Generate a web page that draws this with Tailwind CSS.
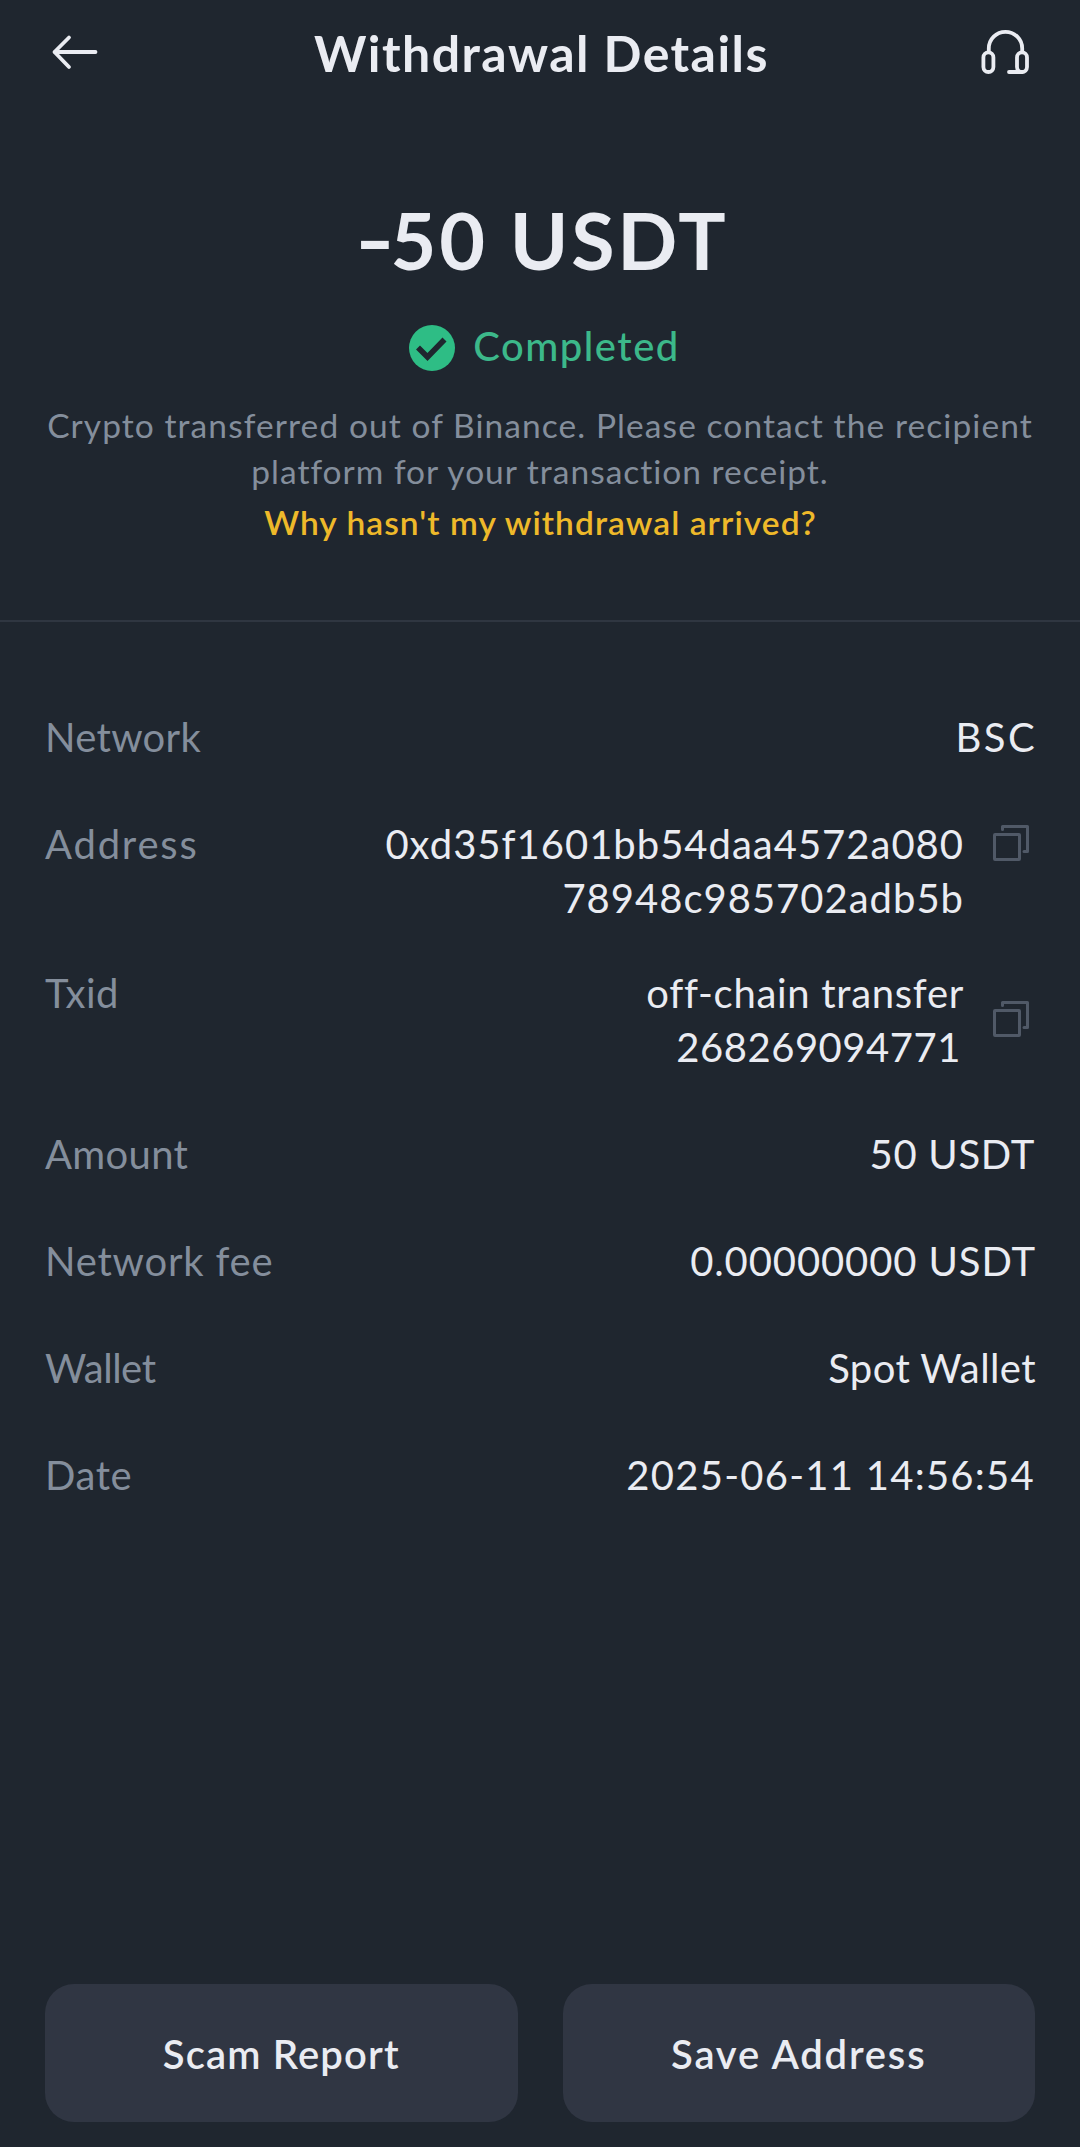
<!DOCTYPE html>
<html lang="en">
<head>
<meta charset="utf-8">
<title>Withdrawal Details</title>
<script src="https://cdn.jsdelivr.net/npm/@tailwindcss/browser@4"></script>
</head>
<body class="bg-[#1f262f] font-[Lato,sans-serif] text-[#eaecf2]">
<div class="flex h-[2147px] w-[1080px] flex-col overflow-hidden">
  <header class="flex h-[104px] shrink-0 items-center justify-between pl-[50px] pr-[48px]">
    <svg class="h-[40px] w-[50px]" viewBox="0 0 50 40" fill="none" stroke="currentColor" stroke-width="3.8" stroke-linecap="round" stroke-linejoin="round"><path d="M45.5 20H4.5M19 5.5 4.5 20 19 35"/></svg>
    <h1 class="pt-[1px] pl-[3px] text-[50px] leading-[60px] font-bold tracking-[1.46px]">Withdrawal Details</h1>
    <svg class="h-[48px] w-[52px]" viewBox="0 0 52 48" fill="none" stroke="currentColor" stroke-width="3.8" stroke-linecap="round" stroke-linejoin="round"><rect x="3.4" y="24.4" width="10" height="19.6" rx="5"/><rect x="37" y="24.4" width="10" height="19.6" rx="5"/><path d="M8.8 24V20.5a16.7 16.7 0 0 1 33.4 0V24M29 44h13"/></svg>
  </header>

  <section class="flex h-[518px] shrink-0 flex-col items-center border-b-2 border-[#2f3641] pt-[96px]">
    <p class="pl-[3px] text-[79px] leading-[80px] font-bold tracking-[2.8px]"><span class="inline-block w-[36px] origin-left -translate-y-[1px] scale-x-[1.35] tracking-normal">-</span>50 USDT</p>
    <div class="mt-[45px] flex h-[46px] items-center gap-[18px] pl-[9px]">
      <svg class="h-[46px] w-[46px]" viewBox="0 0 46 46"><circle cx="23" cy="23" r="23" fill="#2ebd85"/><path d="M9 22.5 18.5 32 35.5 14.5" fill="none" stroke="#1f262f" stroke-width="5.6"/></svg>
      <span class="-mt-[4px] text-[40px] leading-[48px] font-medium tracking-[1.5px] text-[#3cb88a]">Completed</span>
    </div>
    <p class="mt-[31px] text-center text-[33.5px] leading-[46px] tracking-[1.08px] text-[#848e9c]">Crypto transferred out of Binance. Please contact the recipient<br><span class="tracking-[1px]">platform for your transaction receipt.</span></p>
    <a class="mt-[5px] pl-[1px] text-[33.5px] leading-[46px] font-semibold tracking-[1.05px] text-[#eeb92a]">Why hasn't my withdrawal arrived?</a>
  </section>

  <dl class="flex flex-col pl-[45px] pr-[45px] pt-[88px] text-[40px] leading-[54px]">
    <div class="mb-[53px] flex justify-between">
      <dt class="tracking-[0.31px] text-[#848e9c]">Network</dt>
      <dd class="-mr-[2px] tracking-[2.4px]">BSC</dd>
    </div>
    <div class="mb-[41px] flex justify-between">
      <dt class="tracking-[1.8px] text-[#848e9c]">Address</dt>
      <dd class="flex gap-[28px] text-right">
        <span class="tracking-[1px]">0xd35f1601bb54daa4572a080<br>78948c985702adb5b</span>
        <svg class="mt-[7px] mr-[5px] h-[38px] w-[38px]" viewBox="0 0 38 38" fill="none" stroke="#505967" stroke-width="3" stroke-linecap="round" stroke-linejoin="round"><rect x="2.5" y="10.5" width="25" height="25" rx=".5"/><path d="M10.5 5.5V2.5H35.5V27.5H32"/></svg>
      </dd>
    </div>
    <div class="mb-[53px] flex justify-between">
      <dt class="tracking-[0.47px] text-[#848e9c]">Txid</dt>
      <dd class="flex gap-[28px] text-right">
        <span><span class="tracking-[0.7px]">off-chain transfer</span><br><span class="mr-[3px] tracking-[0.53px]">268269094771</span></span>
        <svg class="mt-[34px] mr-[5px] h-[38px] w-[38px]" viewBox="0 0 38 38" fill="none" stroke="#505967" stroke-width="3" stroke-linecap="round" stroke-linejoin="round"><rect x="2.5" y="10.5" width="25" height="25" rx=".5"/><path d="M10.5 5.5V2.5H35.5V27.5H32"/></svg>
      </dd>
    </div>
    <div class="mb-[53px] flex justify-between">
      <dt class="tracking-[0.32px] text-[#848e9c]">Amount</dt>
      <dd class="tracking-[0.7px]">50 USDT</dd>
    </div>
    <div class="mb-[53px] flex justify-between">
      <dt class="tracking-[0.78px] text-[#848e9c]">Network fee</dt>
      <dd class="-mr-[1px] tracking-[0.9px]">0.00000000 USDT</dd>
    </div>
    <div class="mb-[53px] flex justify-between">
      <dt class="tracking-[-0.45px] text-[#848e9c]">Wallet</dt>
      <dd class="-mr-[1px] tracking-[0.41px]">Spot Wallet</dd>
    </div>
    <div class="flex justify-between">
      <dt class="tracking-[0.58px] text-[#848e9c]">Date</dt>
      <dd class="tracking-[1.26px]">2025-06-11 14:56:54</dd>
    </div>
  </dl>

  <footer class="mt-auto mb-[25px] flex gap-[45px] px-[45px] text-[40px] font-semibold">
    <button class="h-[138px] flex-1 rounded-[29px] bg-[#303643] pt-[1px] tracking-[1.15px]">Scam Report</button>
    <button class="h-[138px] flex-1 rounded-[29px] bg-[#303643] pt-[1px] tracking-[1.8px]">Save Address</button>
  </footer>
</div>
</body>
</html>
